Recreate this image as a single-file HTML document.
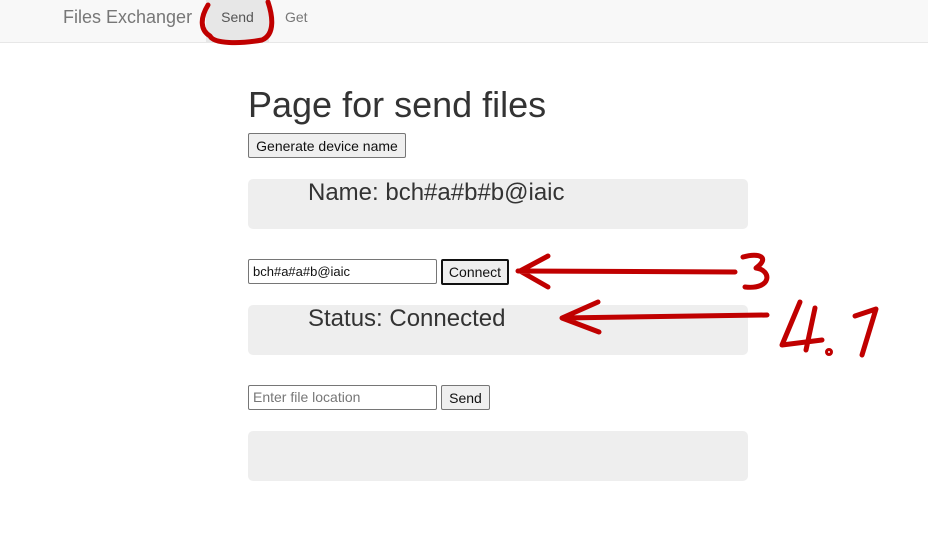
<!DOCTYPE html>
<html><head><meta charset="utf-8"><style>
*{box-sizing:border-box}
body{margin:0;width:928px;height:554px;background:#fff;font-family:"Liberation Sans",sans-serif;color:#333;position:relative;overflow:hidden}
.nav{position:absolute;left:0;top:0;width:928px;height:43px;background:#f8f8f8;border-bottom:1px solid #e7e7e7}
.brand{position:absolute;left:63px;top:7px;font-size:18px;color:#777}
.send{position:absolute;left:206px;top:0;width:63px;height:42px;background:#e7e7e7;font-size:14px;color:#555;text-align:center;line-height:34px}
.get{position:absolute;left:285px;top:9px;font-size:14px;color:#777}
h1{position:absolute;left:248px;top:84px;margin:0;font-size:36px;font-weight:normal;color:#333}
.btn{position:absolute;background:#efefef;border:1px solid #767676;border-radius:2px;font-size:14px;color:#111;text-align:center;padding-top:4px}
.well{position:absolute;left:248px;width:500px;height:50px;background:#eee;border-radius:5px;font-size:24px;padding-left:60px;padding-top:0px;color:#333}
.inp{position:absolute;left:248px;width:189px;height:25px;border:1px solid #767676;border-radius:2px;font-size:13px;padding:4px 4px;color:#111}
</style></head><body>
<div class="nav"><div class="brand">Files Exchanger</div><div class="send">Send</div><div class="get">Get</div></div>
<h1>Page for send files</h1>
<div class="btn" style="left:248px;top:133px;width:158px;height:25px">Generate device name</div>
<div class="well" style="top:179px">Name: bch#a#b#b@iaic</div>
<div class="inp" style="top:259px">bch#a#a#b@iaic</div>
<div class="btn" style="left:441px;top:259px;width:68px;height:26px;border:2px solid #111;padding-top:3px">Connect</div>
<div class="well" style="top:305px">Status: Connected</div>
<div class="inp" style="top:385px;color:#777;font-size:14px;padding-top:3px">Enter file location</div>
<div class="btn" style="left:441px;top:385px;width:49px;height:25px">Send</div>
<div class="well" style="top:431px"></div>
<svg style="position:absolute;left:0;top:0" width="928" height="554" fill="none" stroke="#c00000" stroke-width="5" stroke-linecap="round" stroke-linejoin="round">
<path d="M208 5 C200 18 200 30 210 36 C214 44 240 44 262 40 C276 34 272 14 268 2"/>
<path d="M518 271 L735 272 M548 256 L520 271 L548 287"/>
<path d="M743 257 C760 252 770 258 756 268 C772 270 772 290 745 287"/>
<path d="M562 318 L767 315 M598 302 L562 318 L599 332"/>
<path d="M800 302 L782 345 L822 340 M815 308 L806 350"/>
<circle cx="829" cy="352" r="1.5"/>
<path d="M855 316 L876 309 L862 355"/>
</svg>
</body></html>
